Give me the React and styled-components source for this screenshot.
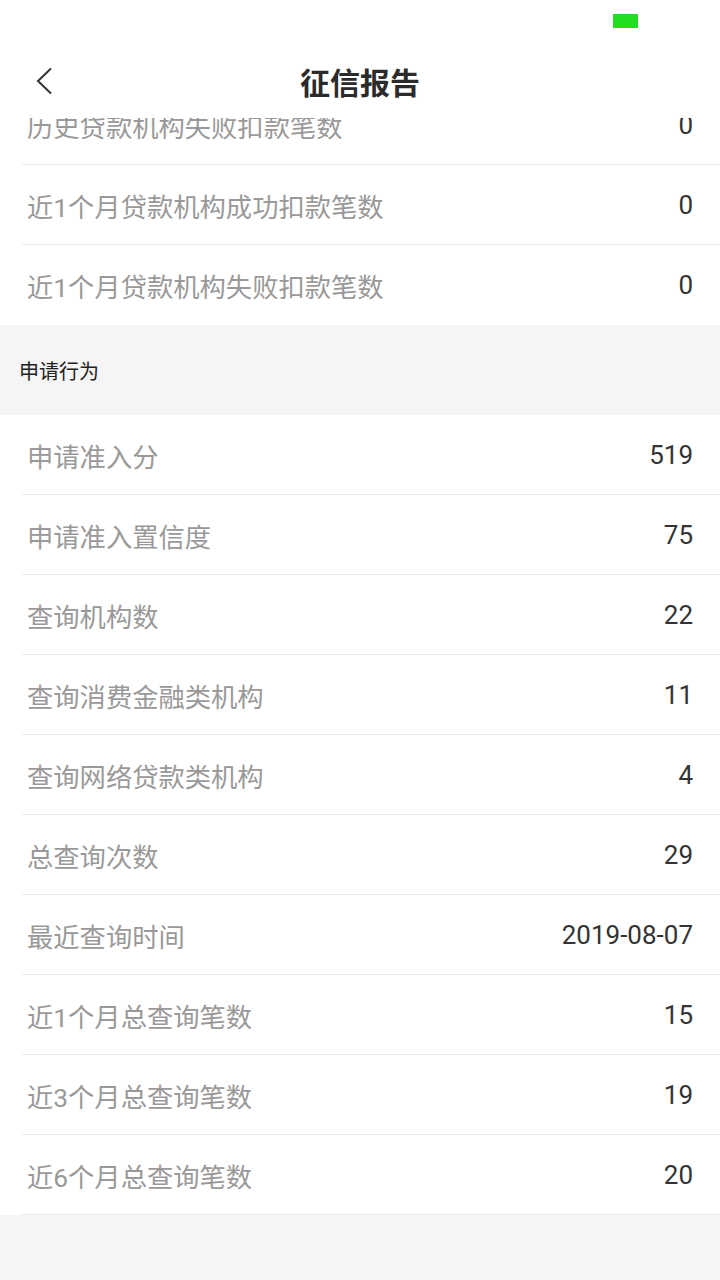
import styled, { createGlobalStyle } from "styled-components";

const GlobalStyle = createGlobalStyle`
  html, body {
    margin: 0;
    padding: 0;
    background: #f5f5f5;
  }
  body {
    font-family: Roboto, "Noto Sans CJK SC", "Noto Sans", sans-serif;
  }
`;

const Page = styled.div`
  width: 720px;
  height: 1280px;
  display: flex;
  flex-direction: column;
  background: #f5f5f5;
  overflow: hidden;
`;

/* Top bar: status strip + title row */
const TopBar = styled.header`
  position: relative;
  z-index: 2;
  background: #fff;
  height: 118px;
  flex-shrink: 0;
  display: flex;
  flex-direction: column;
`;

const StatusStrip = styled.div`
  height: 42px;
  display: flex;
  justify-content: flex-end;
  align-items: flex-start;
  padding: 14px 82px 0 0;
  box-sizing: border-box;
`;

const Battery = styled.span`
  width: 25px;
  height: 14px;
  background: #22dd22;
`;

const TitleRow = styled.div`
  flex: 1;
  display: grid;
  grid-template-columns: 90px 1fr 90px;
  align-items: center;
  padding-top: 2px;
`;

const BackButton = styled.button`
  background: none;
  border: none;
  padding: 0 0 0 34px;
  display: flex;
  align-items: center;
  height: 100%;
  cursor: pointer;
`;

const Title = styled.h1`
  margin: 0;
  text-align: center;
  font-size: 30px;
  font-weight: 700;
  color: #2b2b2b;
  font-family: "Noto Sans CJK SC", sans-serif;
  line-height: 1;
`;

const Scroll = styled.div`
  flex: 1;
  overflow: hidden;
`;

const List = styled.div`
  margin-top: ${(p) => p.$offset || 0}px;
  background: #fff;
`;

const Row = styled.div`
  position: relative;
  height: 80px;
  display: flex;
  align-items: center;
  justify-content: space-between;
  padding: 0 27px;
  background: #fff;

  &::after {
    content: "";
    position: absolute;
    left: 22px;
    right: 0;
    bottom: 0;
    height: 1px;
    background: #ebebeb;
    display: ${(p) => (p.$last ? "none" : "block")};
  }
`;

const Label = styled.span`
  font-size: 26.3px;
  color: #999;
  font-family: Roboto, "Noto Sans CJK SC", sans-serif;
`;

const Value = styled.span`
  font-size: 26px;
  color: #333;
  font-family: Roboto, "Noto Sans CJK SC", sans-serif;
`;

const SectionHeader = styled.div`
  height: 90px;
  background: #f5f5f5;
  display: flex;
  align-items: center;
  padding-left: 19px;
  font-size: 20px;
  color: #222;
  font-family: "Noto Sans CJK SC", sans-serif;
`;

const topRows = [
  ["历史贷款机构失败扣款笔数", "0"],
  ["近1个月贷款机构成功扣款笔数", "0"],
  ["近1个月贷款机构失败扣款笔数", "0"],
];

const applyRows = [
  ["申请准入分", "519"],
  ["申请准入置信度", "75"],
  ["查询机构数", "22"],
  ["查询消费金融类机构", "11"],
  ["查询网络贷款类机构", "4"],
  ["总查询次数", "29"],
  ["最近查询时间", "2019-08-07"],
  ["近1个月总查询笔数", "15"],
  ["近3个月总查询笔数", "19"],
  ["近6个月总查询笔数", "20"],
];

const App = () => {
  return (
    <Page>
      <GlobalStyle />
      <TopBar>
        <StatusStrip>
          <Battery />
        </StatusStrip>
        <TitleRow>
          <BackButton aria-label="返回">
            <svg width="20" height="28" viewBox="0 0 20 28">
              <path
                d="M17 1.5 L4 14 L17 26.5"
                fill="none"
                stroke="#333"
                strokeWidth="2"
              />
            </svg>
          </BackButton>
          <Title>征信报告</Title>
          <span />
        </TitleRow>
      </TopBar>
      <Scroll>
        {/* list is scrolled: its first row slides under the top bar */}
        <List $offset={-33}>
          {topRows.map(([label, value], index) => (
            <Row key={index} $last={index === topRows.length - 1}>
              <Label>{label}</Label>
              <Value>{value}</Value>
            </Row>
          ))}
        </List>
        <SectionHeader>申请行为</SectionHeader>
        <List>
          {applyRows.map(([label, value], index) => (
            <Row key={index}>
              <Label>{label}</Label>
              <Value>{value}</Value>
            </Row>
          ))}
        </List>
      </Scroll>
    </Page>
  );
};

export default App;
